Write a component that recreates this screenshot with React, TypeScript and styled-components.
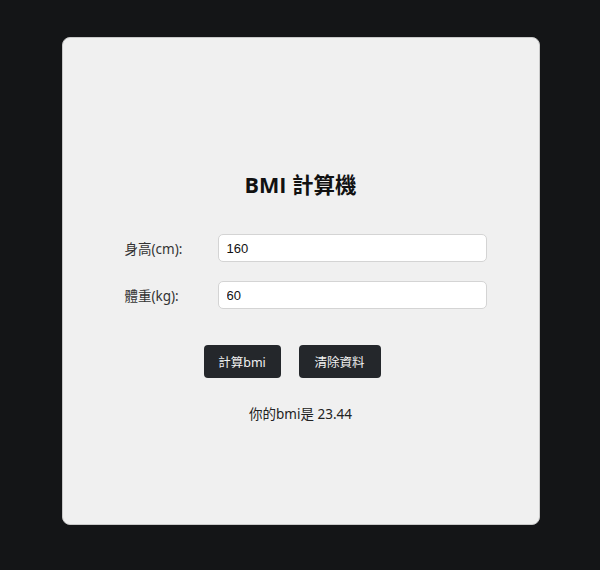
import React, { useState } from "react";
import styled, { createGlobalStyle } from "styled-components";

const GlobalStyle = createGlobalStyle`
  html, body {
    margin: 0;
    padding: 0;
    background: #141517;
  }
  body {
    font-family: "Open Sans", "Noto Sans CJK TC", sans-serif;
  }
`;

const Page = styled.div`
  width: 600px;
  height: 570px;
  display: flex;
  justify-content: center;
  padding-top: 37px;
  box-sizing: border-box;
`;

const Card = styled.div`
  width: 478px;
  height: 488px;
  box-sizing: border-box;
  background: #f0f0f0;
  border: 1px solid #c9c9c9;
  border-radius: 8px;
  display: flex;
  flex-direction: column;
  align-items: center;
  padding-top: 131px;
  margin-left: 1px;
`;

const Title = styled.h1`
  margin: 0;
  font-size: 21.5px;
  font-weight: 700;
  line-height: 32px;
  color: #111;
  font-family: "Open Sans", "Noto Sans CJK TC", sans-serif;
`;

const Form = styled.div`
  width: 362px;
  margin-left: 10px;
  margin-top: 33px;
  display: flex;
  flex-direction: column;
  gap: 19px;
`;

const Row = styled.div`
  display: flex;
  align-items: center;
`;

const Label = styled.label`
  width: 93px;
  font-size: 13.5px;
  color: #333;
  font-family: "Noto Sans", "Noto Sans CJK TC", sans-serif;
`;

const Input = styled.input`
  width: 269px;
  height: 28px;
  box-sizing: border-box;
  border: 1px solid #d4d4d4;
  border-radius: 5px;
  background: #fff;
  padding: 0 8px;
  font-size: 13px;
  color: #111;
  font-family: "Liberation Sans", Arial, sans-serif;
  outline: none;
`;

const Buttons = styled.div`
  display: flex;
  gap: 18px;
  margin-top: 36px;
  margin-right: 17px;
`;

const Button = styled.button<{ $w: number }>`
  width: ${(p) => p.$w}px;
  height: 33px;
  border: none;
  border-radius: 4px;
  background: #24272b;
  color: #f2f2f2;
  font-size: 12.5px;
  font-family: "Noto Sans", "Noto Sans CJK TC", sans-serif;
  cursor: pointer;
  padding: 0;
`;

const Result = styled.p`
  margin: 26px 0 0;
  font-size: 13.5px;
  line-height: 20px;
  color: #222;
  font-family: "Noto Sans", "Noto Sans CJK TC", sans-serif;
`;

export default function App() {
  const [height, setHeight] = useState("160");
  const [weight, setWeight] = useState("60");
  const [bmi, setBmi] = useState("23.44");

  const calc = () => {
    const h = parseFloat(height) / 100;
    const w = parseFloat(weight);
    if (h > 0 && w > 0) setBmi((w / (h * h)).toFixed(2));
  };
  const clear = () => {
    setHeight("");
    setWeight("");
    setBmi("");
  };

  return (
    <>
      <GlobalStyle />
      <Page>
        <Card>
          <Title>BMI 計算機</Title>
          <Form>
            <Row>
              <Label>身高(cm):</Label>
              <Input value={height} onChange={(e) => setHeight(e.target.value)} />
            </Row>
            <Row>
              <Label>體重(kg):</Label>
              <Input value={weight} onChange={(e) => setWeight(e.target.value)} />
            </Row>
          </Form>
          <Buttons>
            <Button $w={77} onClick={calc}>計算bmi</Button>
            <Button $w={82} onClick={clear}>清除資料</Button>
          </Buttons>
          <Result>你的bmi是 {bmi}</Result>
        </Card>
      </Page>
    </>
  );
}
